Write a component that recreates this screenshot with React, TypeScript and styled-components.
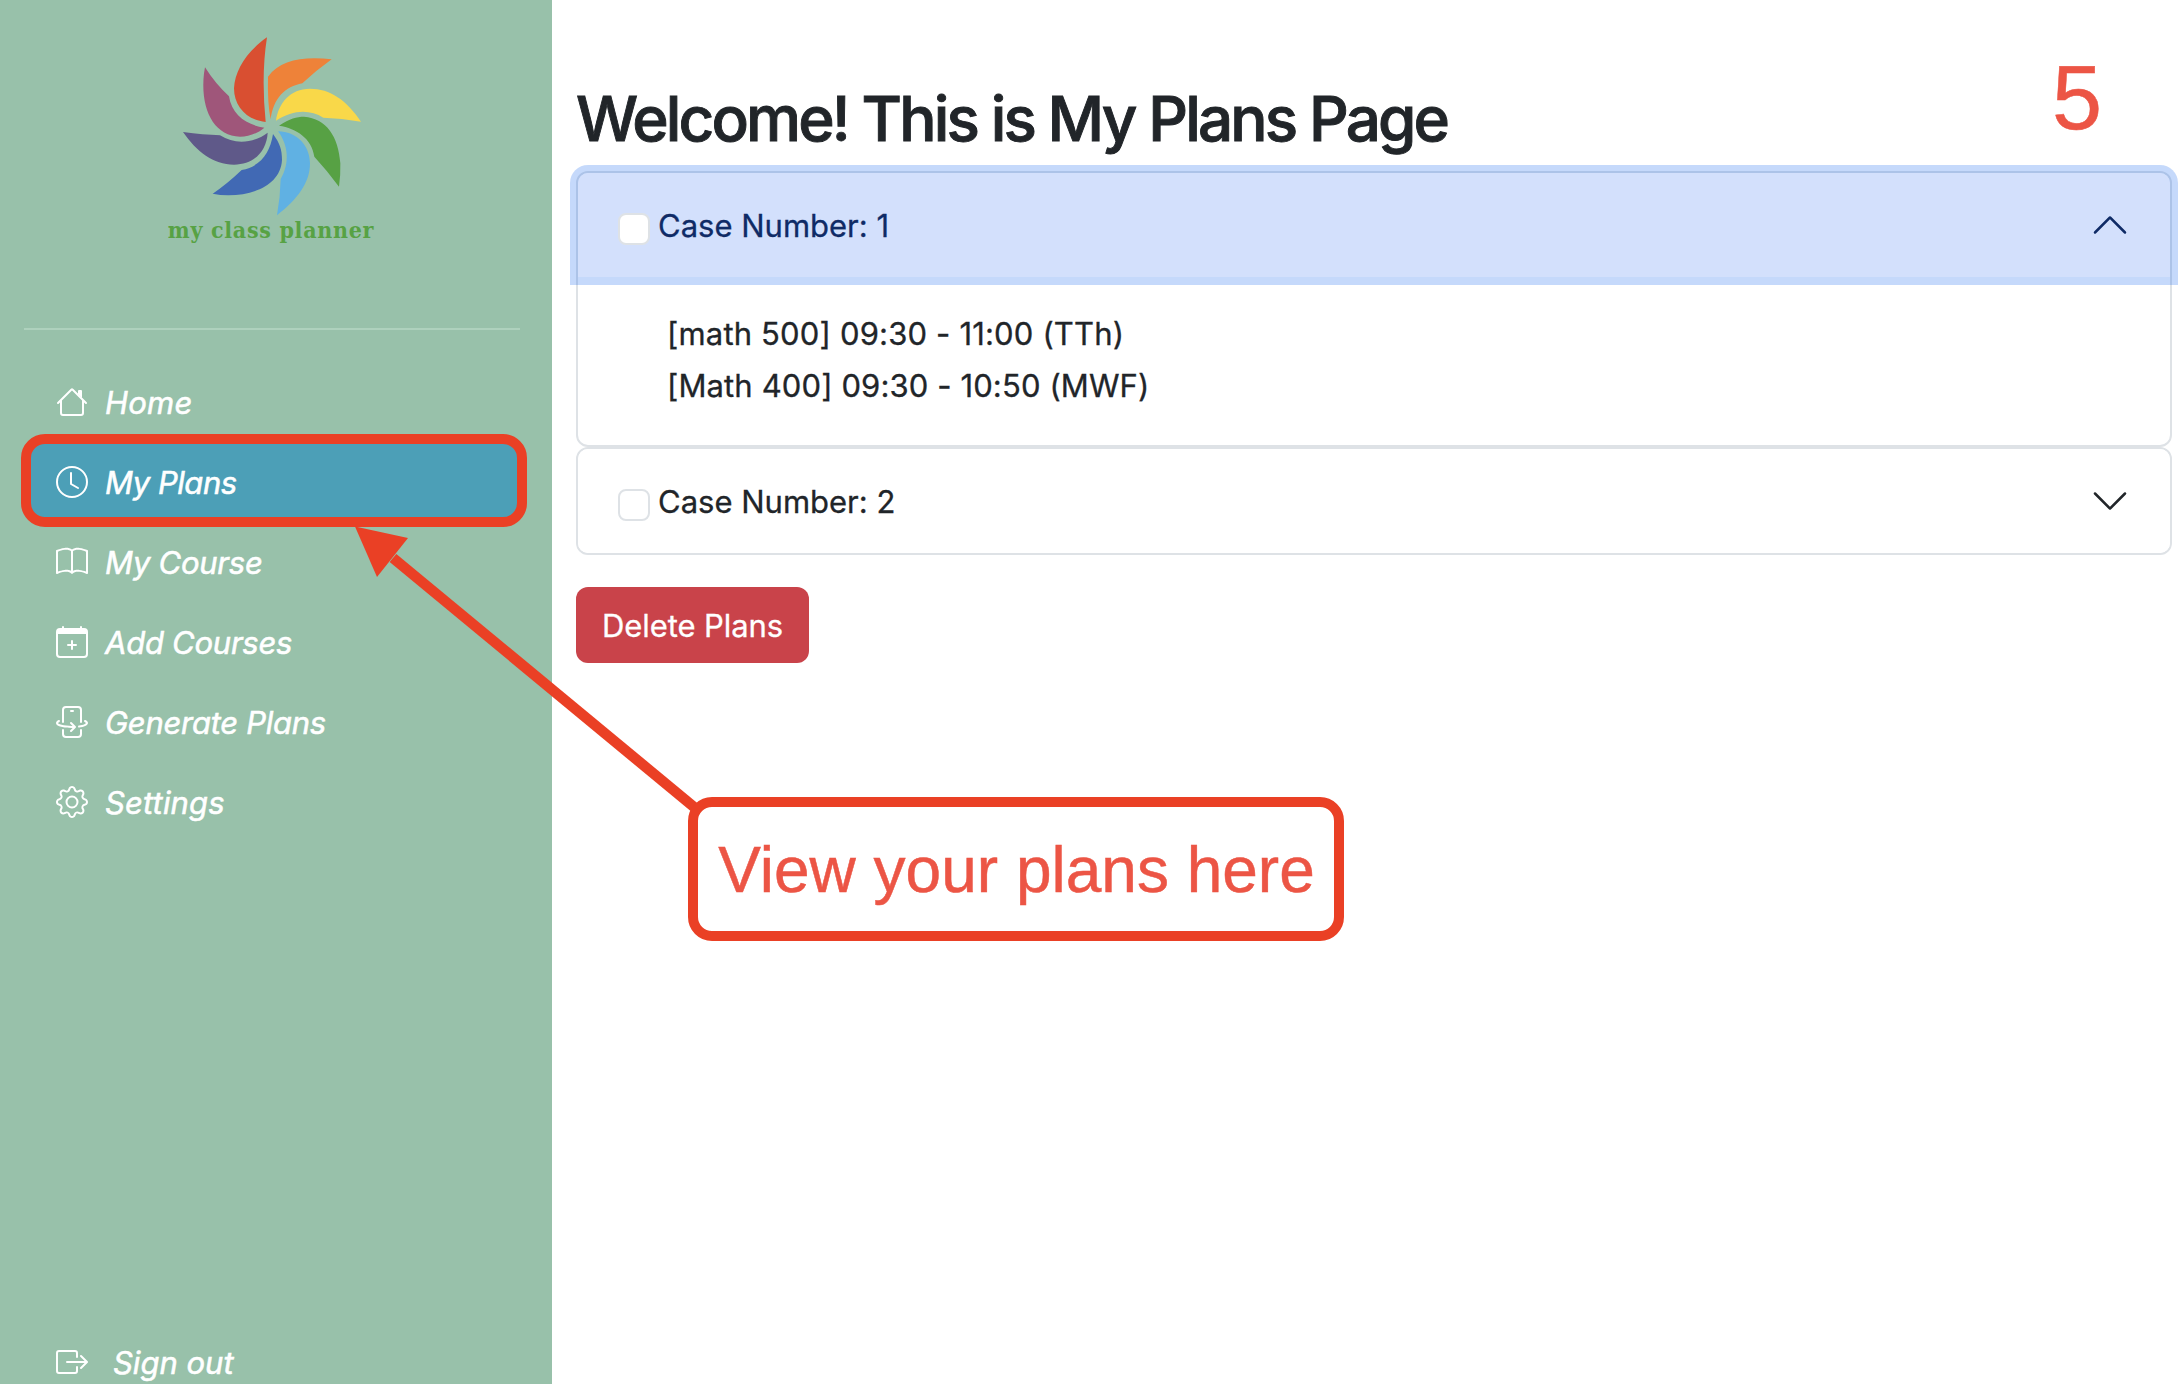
import React from "react";
import styled, { createGlobalStyle } from "styled-components";
import { BsClock, BsBook, BsCalendarPlus, BsPhoneFlip, BsGear, BsBoxArrowRight } from "react-icons/bs";

const Global = createGlobalStyle`
  *, *::before, *::after { box-sizing: border-box; }
  body { margin: 0; background: #fff; color: #212529; font-family: Inter, "Liberation Sans", sans-serif; font-size: 31px; overflow: hidden; }
`;
const Page = styled.div`
  position: relative;
  display: flex;
  width: 100%;
  height: 1384px;
  overflow: hidden;
`;
const Sidebar = styled.aside`
  display: flex;
  flex-direction: column;
  flex: 0 0 552px;
  padding: 20px 32px 0 24px;
  background: #98c1aa;
  color: #fff;
`;
const Brand = styled.div`
  display: flex;
  flex-direction: column;
  align-items: center;
  height: 308px;
  padding-right: 2px;
`;
const BrandMark = styled.svg`
  width: 230px;
  height: 197px;
  margin-left: 8px;
`;
const BrandName = styled.div`
  margin-top: -1px;
  font: bold 23px/28px "DejaVu Serif", serif;
  font-stretch: condensed;
  letter-spacing: 0.68px;
  white-space: nowrap;
  color: #57a244;
`;
const Divider = styled.hr`
  width: 100%;
  height: 2px;
  margin: 0 0 32px;
  border: 0;
  background: #aed1bd;
`;
const Nav = styled.nav`
  display: flex;
  flex-direction: column;
  flex: 1;
`;
const NavLink = styled.a<{ $active?: boolean; $gap?: number; $spacing?: number }>`
  display: flex;
  align-items: center;
  gap: ${(p) => p.$gap ?? 17}px;
  height: 80px;
  padding-left: 32px;
  border-radius: 16px;
  background: ${(p) => (p.$active ? "#4c9fb7" : "transparent")};
  font-style: italic;
  letter-spacing: ${(p) => p.$spacing ?? -0.3}px;
  white-space: nowrap;
  -webkit-text-stroke: 0.55px currentColor;
  svg { width: 32px; height: 32px; flex: none; }
`;
const SignOut = styled(NavLink)`
  margin-bottom: -18px;
`;
const Main = styled.main`
  flex: 1;
  min-width: 0;
  padding: 80px 10px 0 24px;
  -webkit-text-stroke: 0.3px currentColor;
`;
const Title = styled.h1`
  margin: 0 0 14px;
  font-size: 62px;
  font-weight: 500;
  line-height: 77px;
  letter-spacing: -2.85px;
  white-space: nowrap;
  -webkit-text-stroke: 0.9px currentColor;
`;
const Item = styled.section`
  border: 2px solid #dee2e6;
  border-radius: 12px;
`;
const ItemHeader = styled.div<{ $open?: boolean }>`
  display: flex;
  align-items: center;
  height: 104px;
  padding: 0 40px;
  border-radius: ${(p) => (p.$open ? "10px 10px 0 0" : "10px")};
  background: ${(p) => (p.$open ? "#d3e0fc" : "#fff")};
  color: ${(p) => (p.$open ? "#0f2b66" : "#212529")};
  box-shadow: ${(p) => (p.$open ? "0 0 0 8px rgba(23,103,239,.25)" : "none")};
`;
const Check = styled.span`
  width: 32px;
  height: 32px;
  margin: 8px 8px 0 0;
  border: 2px solid #dee2e6;
  border-radius: 8px;
  background: #fff;
`;
const ItemLabel = styled.span`
  flex: 1;
`;
const Chevron = styled.svg<{ $up?: boolean }>`
  width: 40px;
  height: 40px;
  transform: ${(p) => (p.$up ? "rotate(180deg)" : "none")};
`;
const ItemBody = styled.div`
  height: 168px;
  padding: 31px 89px 0;
`;
const Course = styled.div<{ $spacing: number }>`
  line-height: 52px;
  letter-spacing: ${(p) => p.$spacing}px;
`;
const DeleteButton = styled.button`
  width: 233px;
  height: 76px;
  margin-top: 32px;
  padding: 0;
  border: 0;
  border-radius: 12px;
  background: #c9434a;
  color: #fff;
  font: inherit;
  letter-spacing: -0.07px;
`;
const StepNumber = styled.div`
  position: absolute;
  left: 2052px;
  top: 48px;
  font: 90px/100px "Liberation Sans", sans-serif;
  color: #ec5545;
  -webkit-text-stroke: 0.5px currentColor;
`;
const Highlight = styled.div`
  position: absolute;
  left: 21px;
  top: 434px;
  width: 506px;
  height: 93px;
  border: 10px solid #ea4025;
  border-radius: 24px;
`;
const Arrow = styled.svg`
  position: absolute;
  left: 340px;
  top: 520px;
  width: 370px;
  height: 300px;
`;
const Callout = styled.div`
  position: absolute;
  left: 688px;
  top: 797px;
  width: 656px;
  height: 144px;
  display: flex;
  align-items: center;
  justify-content: center;
  padding: 2px 0 0 1px;
  border: 10px solid #ea4025;
  border-radius: 24px;
  background: #fff;
  color: #ec5545;
  font: 64px/72px "Liberation Sans", sans-serif;
  white-space: nowrap;
  -webkit-text-stroke: 0.5px currentColor;
`;

const petals = [
  ["#d94f31", "M321 52 Q303 165 317 306 C260 300 222 260 222 205 C225 150 260 95 321 52Z"],
  ["#ee8239", "M324 170 C360 120 430 108 515 118 Q470 150 427 190 C375 200 340 235 332 298 Q322 250 324 170Z"],
  ["#f9d849", "M348 302 C355 250 390 206 450 206 C510 206 560 240 603 305 Q545 295 490 293 C450 268 400 268 348 302Z"],
  ["#57a144", "M357 317 C390 295 410 290 432 290 C500 295 535 350 541 430 Q542 465 537 500 Q500 450 463 410 C455 355 410 325 357 317Z"],
  ["#60b1e3", "M354 334 C410 335 449 375 450 430 C450 490 410 540 351 586 Q361 530 362 477 C390 430 385 375 354 334Z"],
  ["#4169b4", "M339 342 C360 370 366 390 366 420 C362 490 290 525 205 526 Q180 526 158 521 Q200 493 245 450 C300 440 330 400 339 342Z"],
  ["#5f5989", "M323 338 C320 395 280 434 222 434 C160 434 110 395 69 336 Q130 344 180 346 C225 375 280 370 323 338Z"],
  ["#9f567a", "M135 142 Q165 190 207 229 C215 285 260 315 313 323 C290 342 265 350 240 350 C160 348 120 265 132 160Z"],
];

const House = () => (
  <svg viewBox="0 0 16 16" fill="currentColor">
    <path fillRule="evenodd" d="M2 13.5V7h1v6.5a.5.5 0 0 0 .5.5h9a.5.5 0 0 0 .5-.5V7h1v6.5a1.5 1.5 0 0 1-1.5 1.5h-9A1.5 1.5 0 0 1 2 13.5zm11-11V6l-2-2V2.5a.5.5 0 0 1 .5-.5h1a.5.5 0 0 1 .5.5z" />
    <path fillRule="evenodd" d="M7.293 1.5a1 1 0 0 1 1.414 0l6.647 6.646a.5.5 0 0 1-.708.708L8 2.207 1.354 8.854a.5.5 0 1 1-.708-.708L7.293 1.5z" />
  </svg>
);
const links = [
  { icon: House, label: "Home", spacing: 0.2 },
  { icon: BsClock, label: "My Plans", active: true, spacing: -0.45 },
  { icon: BsBook, label: "My Course", spacing: -0.25 },
  { icon: BsCalendarPlus, label: "Add Courses", spacing: -0.25 },
  { icon: BsPhoneFlip, label: "Generate Plans", spacing: -0.28 },
  { icon: BsGear, label: "Settings", spacing: 0.15 },
];
const ChevronIcon = ({ up }: { up?: boolean }) => (
  <Chevron $up={up} viewBox="0 0 16 16" fill="currentColor">
    <path d="M1.646 4.646a.5.5 0 0 1 .708 0L8 10.293l5.646-5.647a.5.5 0 0 1 .708.708l-6 6a.5.5 0 0 1-.708 0l-6-6a.5.5 0 0 1 0-.708z" />
  </Chevron>
);

export default function App() {
  return (
    <Page>
      <Global />
      <Sidebar>
        <Brand>
          <BrandMark viewBox="0 0 690 591">
            {petals.map(([fill, d]) => <path key={fill} fill={fill} d={d} />)}
          </BrandMark>
          <BrandName>my class planner</BrandName>
        </Brand>
        <Divider />
        <Nav>
          {links.map(({ icon: Icon, label, active, spacing }) => (
            <NavLink key={label} $active={active} $spacing={spacing}><Icon /><span>{label}</span></NavLink>
          ))}
        </Nav>
        <SignOut $gap={25} $spacing={0}><BsBoxArrowRight /><span>Sign out</span></SignOut>
      </Sidebar>
      <Main>
        <Title>Welcome! This is My Plans Page</Title>
        <Item>
          <ItemHeader $open><Check /><ItemLabel>Case Number: 1</ItemLabel><ChevronIcon up /></ItemHeader>
          <ItemBody>
            <Course $spacing={0.17}>[math 500] 09:30 - 11:00 (TTh)</Course>
            <Course $spacing={0.12}>[Math 400] 09:30 - 10:50 (MWF)</Course>
          </ItemBody>
        </Item>
        <Item>
          <ItemHeader><Check /><ItemLabel>Case Number: 2</ItemLabel><ChevronIcon /></ItemHeader>
        </Item>
        <DeleteButton>Delete Plans</DeleteButton>
      </Main>
      <StepNumber>5</StepNumber>
      <Highlight />
      <Arrow viewBox="340 520 370 300">
        <path d="M393 558L700 812" stroke="#ea4025" strokeWidth="10.5" />
        <path d="M355 526.5L408 538L377 577Z" fill="#ea4025" />
      </Arrow>
      <Callout>View your plans here</Callout>
    </Page>
  );
}
